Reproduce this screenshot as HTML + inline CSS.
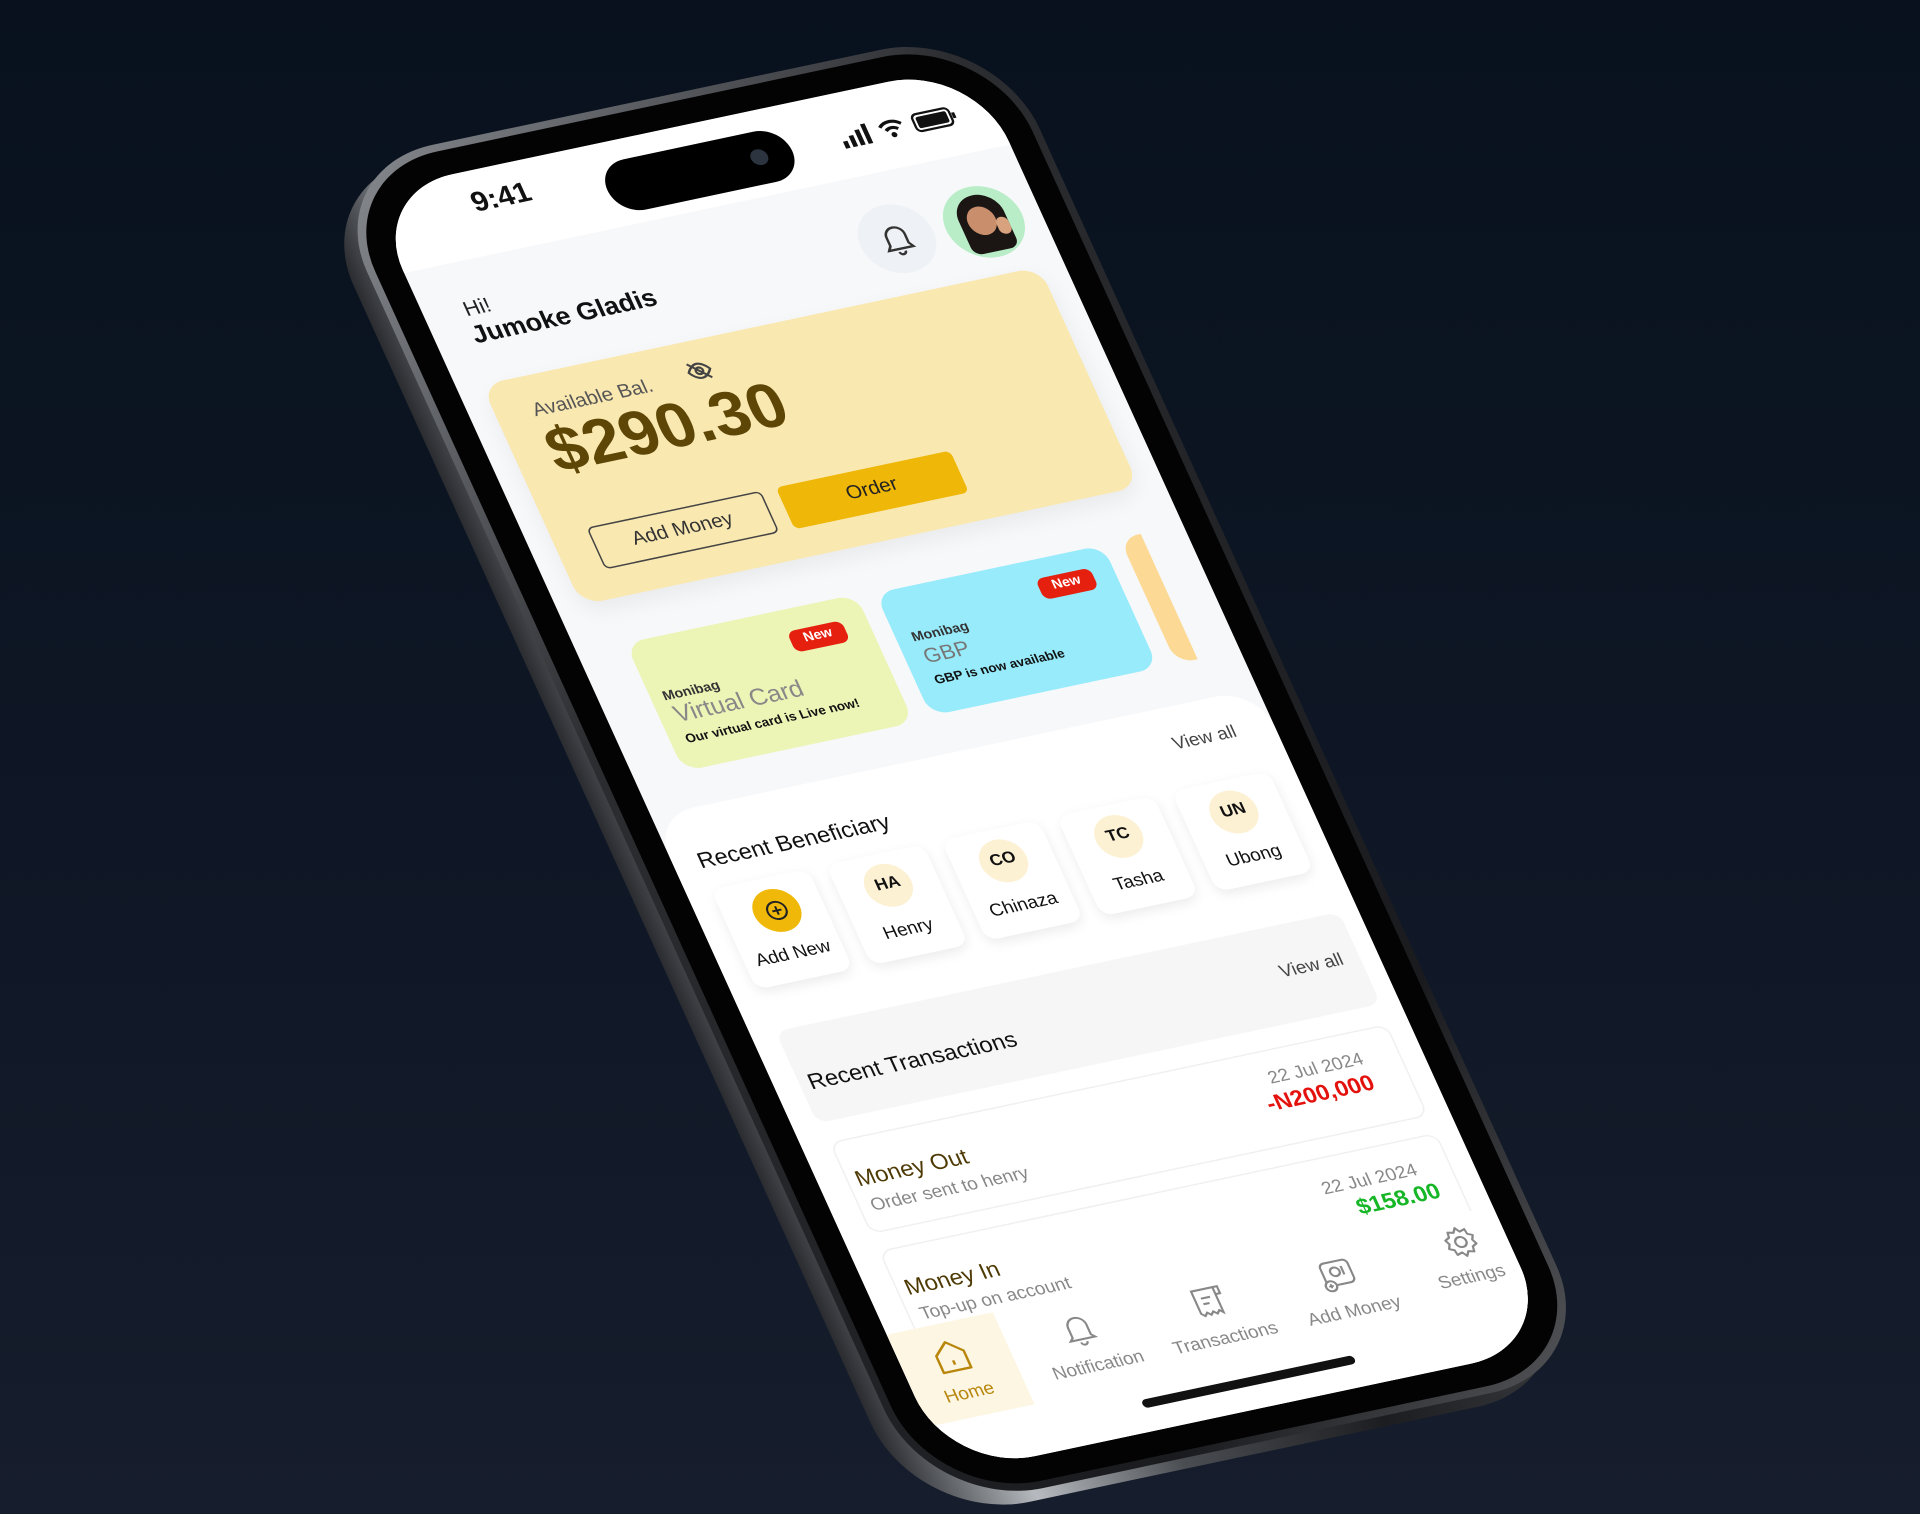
<!DOCTYPE html>
<html><head><meta charset="utf-8">
<style>
*{box-sizing:border-box;margin:0;padding:0}
html,body{width:1920px;height:1514px;overflow:hidden}
body{background:linear-gradient(180deg,#08111d 0%,#0f1726 55%,#161d2c 100%);font-family:"Liberation Sans",sans-serif;position:relative}
.m{position:absolute;left:0;top:0;transform-origin:0 0;transform:matrix(1.5153,-0.3214,0.6333,1.3934,367.4,192.2)}
.side{transform:matrix(1.5153,-0.3214,0.6333,1.3934,354,206)}
.abs{position:absolute}
.t{position:absolute;white-space:nowrap}
</style></head><body>
<div class="m side"><div class="abs" style="left:-22px;top:-22px;width:444px;height:964px;border-radius:74px;background:linear-gradient(90deg,#2a2c30,#b7bbc0 18%,#4a4d52 40%,#1c1d20 70%,#3a3c40)"></div></div>
<div class="m">
 <div class="abs" style="left:-22px;top:-22px;width:444px;height:964px;border-radius:74px;background:linear-gradient(135deg,#8a8d92,#2b2d31 30%,#1a1b1e 80%,#55575b)"></div>
 <div class="abs" style="left:-17px;top:-17px;width:434px;height:954px;border-radius:70px;background:#030303"></div>
 <div class="abs" style="left:0;top:0;width:400px;height:920px;border-radius:56px;background:#f7f8fa;overflow:hidden">
  <div class="abs" style="left:0;top:0;width:400px;height:58px;background:#fff"></div>
  <div class="t" style="left:60px;top:12px;font-size:19px;font-weight:bold;color:#111">9:41</div>
  <div class="abs" style="left:145px;top:14px;width:122px;height:36px;border-radius:18px;background:#000"></div>
  <div class="abs" style="left:240px;top:26px;width:11px;height:11px;border-radius:50%;background:#2c3440"></div>
  <svg class="abs" style="left:300px;top:22px" width="90" height="18" viewBox="0 0 90 18">
   <rect x="0" y="11" width="3" height="5" fill="#111"/><rect x="5" y="8" width="3" height="8" fill="#111"/><rect x="10" y="5" width="3" height="11" fill="#111"/><rect x="15" y="2" width="3" height="14" fill="#111"/>
   <path d="M26 7a10 10 0 0 1 14 0M29 10a6 6 0 0 1 8 0" stroke="#111" stroke-width="2.2" fill="none"/><circle cx="33" cy="13.5" r="1.8" fill="#111"/>
   <rect x="48" y="3" width="24" height="12" rx="3" fill="none" stroke="#111" stroke-width="1.5"/><rect x="50" y="5" width="20" height="8" rx="1.5" fill="#111"/><rect x="73" y="7" width="2" height="4" fill="#111"/>
  </svg>
  <div class="abs" style="left:282px;top:80px;width:48px;height:48px;border-radius:50%;background:#eef1f5"></div>
  <svg class="abs" style="left:294px;top:91px" width="24" height="26" viewBox="0 0 24 26"><path d="M6 17V11a6 6 0 0 1 12 0v6l2 3H4z M10 22a2 2 0 0 0 4 0" fill="none" stroke="#333" stroke-width="1.6"/></svg>
  <div class="abs" style="left:338px;top:80px;width:50px;height:50px;border-radius:50%;background:#b9edc8;overflow:hidden">
   <div class="abs" style="left:10px;top:6px;width:30px;height:40px;border-radius:15px 15px 6px 6px;background:#1b1614"></div>
   <div class="abs" style="left:15px;top:14px;width:18px;height:20px;border-radius:50%;background:#c98f6d"></div>
   <div class="abs" style="left:32px;top:24px;width:8px;height:12px;border-radius:4px;background:#d9a27f"></div>
  </div>
  <div class="t" style="left:26px;top:82px;font-size:14px;color:#222">Hi!</div>
  <div class="t" style="left:24px;top:99px;font-size:17px;font-weight:bold;color:#111">Jumoke Gladis</div>
  <div class="abs" style="left:16px;top:142px;width:368px;height:158px;border-radius:14px;background:#fae8b1;box-shadow:0 6px 14px rgba(0,0,0,.06)"></div>
  <div class="t" style="left:40px;top:158px;font-size:13px;color:#555">Available Bal.</div>
  <svg class="abs" style="left:142px;top:154px" width="18" height="18" viewBox="0 0 18 18"><path d="M2 9s3-5 7-5 7 5 7 5-3 5-7 5-7-5-7-5zM3 3l12 12" fill="none" stroke="#444" stroke-width="1.5"/><circle cx="9" cy="9" r="2.3" fill="none" stroke="#444" stroke-width="1.5"/></svg>
  <div class="t" style="left:38px;top:172px;font-size:43px;font-weight:bold;color:#5e4606;letter-spacing:0px">$290.30</div>
  <div class="abs" style="left:40px;top:250px;width:115px;height:30px;border:1.5px solid #444;border-radius:4px"></div>
  <div class="t" style="left:40px;top:256px;width:115px;text-align:center;font-size:13px;color:#333">Add Money</div>
  <div class="abs" style="left:165px;top:250px;width:115px;height:30px;border-radius:4px;background:#efb708"></div>
  <div class="t" style="left:165px;top:256px;width:115px;text-align:center;font-size:13px;color:#222">Order</div>
  <div class="abs" style="left:32px;top:331px;width:152px;height:92px;border-radius:12px;background:#ecf4b6"></div>
  <div class="abs" style="left:132px;top:346px;width:36px;height:15px;border-radius:5px;background:#e5200f"></div>
  <div class="t" style="left:132px;top:347px;width:36px;text-align:center;font-size:9px;color:#fff;font-weight:bold">New</div>
  <div class="t" style="left:40px;top:366px;font-size:9px;color:#333;font-weight:bold">Monibag</div>
  <div class="t" style="left:42px;top:377px;font-size:16px;color:#888">Virtual Card</div>
  <div class="t" style="left:42px;top:397px;font-size:8.5px;color:#111;font-weight:bold">Our virtual card is Live now!</div>
  <div class="abs" style="left:196px;top:333px;width:150px;height:88px;border-radius:12px;background:#97ebfb"></div>
  <div class="abs" style="left:296px;top:346px;width:36px;height:15px;border-radius:5px;background:#e5200f"></div>
  <div class="t" style="left:296px;top:347px;width:36px;text-align:center;font-size:9px;color:#fff;font-weight:bold">New</div>
  <div class="t" style="left:206px;top:362px;font-size:9px;color:#333;font-weight:bold">Monibag</div>
  <div class="t" style="left:208px;top:373px;font-size:14px;color:#777">GBP</div>
  <div class="t" style="left:208px;top:393px;font-size:8.5px;color:#111;font-weight:bold">GBP is now available</div>
  <div class="abs" style="left:358px;top:331px;width:14px;height:90px;border-radius:12px 0 0 12px;background:#fcd995"></div>
  <div class="abs" style="left:0;top:448px;width:400px;height:472px;border-radius:28px 28px 0 0;background:#fff"></div>
  <div class="t" style="left:334px;top:466px;font-size:12px;color:#444">View all</div>
  <div class="t" style="left:16px;top:476px;font-size:15px;color:#111">Recent Beneficiary</div>
  <div class="abs" style="left:16px;top:504px;width:64px;height:72px;border-radius:8px;background:#fff;box-shadow:0 3px 8px rgba(0,0,0,.08)"></div>
  <div class="abs" style="left:35px;top:512px;width:30px;height:30px;border-radius:50%;background:#f0b90a"></div>
  <svg class="abs" style="left:40px;top:517px" width="20" height="20" viewBox="0 0 20 20"><circle cx="10" cy="10" r="6" fill="none" stroke="#222" stroke-width="1.3"/><path d="M10 7v6M7 10h6" stroke="#222" stroke-width="1.3"/></svg>
  <div class="t" style="left:16px;top:550px;width:64px;text-align:center;font-size:12px;color:#111">Add New</div>
  <div class="abs" style="left:92px;top:504px;width:64px;height:72px;border-radius:8px;background:#fff;box-shadow:0 3px 8px rgba(0,0,0,.08)"></div>
  <div class="abs" style="left:109px;top:511px;width:30px;height:30px;border-radius:50%;background:#fdf1d4"></div>
  <div class="t" style="left:92px;top:519px;width:64px;text-align:center;font-size:11px;color:#111;font-weight:bold">HA</div>
  <div class="t" style="left:92px;top:550px;width:64px;text-align:center;font-size:12px;color:#111">Henry</div>
  <div class="abs" style="left:168px;top:504px;width:64px;height:72px;border-radius:8px;background:#fff;box-shadow:0 3px 8px rgba(0,0,0,.08)"></div>
  <div class="abs" style="left:185px;top:511px;width:30px;height:30px;border-radius:50%;background:#fdf1d4"></div>
  <div class="t" style="left:168px;top:519px;width:64px;text-align:center;font-size:11px;color:#111;font-weight:bold">CO</div>
  <div class="t" style="left:168px;top:550px;width:64px;text-align:center;font-size:12px;color:#111">Chinaza</div>
  <div class="abs" style="left:244px;top:504px;width:64px;height:72px;border-radius:8px;background:#fff;box-shadow:0 3px 8px rgba(0,0,0,.08)"></div>
  <div class="abs" style="left:261px;top:511px;width:30px;height:30px;border-radius:50%;background:#fdf1d4"></div>
  <div class="t" style="left:244px;top:519px;width:64px;text-align:center;font-size:11px;color:#111;font-weight:bold">TC</div>
  <div class="t" style="left:244px;top:550px;width:64px;text-align:center;font-size:12px;color:#111">Tasha</div>
  <div class="abs" style="left:320px;top:504px;width:64px;height:72px;border-radius:8px;background:#fff;box-shadow:0 3px 8px rgba(0,0,0,.08)"></div>
  <div class="abs" style="left:337px;top:511px;width:30px;height:30px;border-radius:50%;background:#fdf1d4"></div>
  <div class="t" style="left:320px;top:519px;width:64px;text-align:center;font-size:11px;color:#111;font-weight:bold">UN</div>
  <div class="t" style="left:320px;top:550px;width:64px;text-align:center;font-size:12px;color:#111">Ubong</div>
  <div class="abs" style="left:16px;top:606px;width:372px;height:66px;border-radius:8px;background:#f6f6f6"></div>
  <div class="t" style="left:336px;top:630px;font-size:12px;color:#444">View all</div>
  <div class="t" style="left:22px;top:636px;font-size:15px;color:#111">Recent Transactions</div>
  <div class="abs" style="left:18px;top:686px;width:368px;height:66px;border-radius:8px;background:#fff;border:1px solid #f0f0f0"></div>
  <div class="t" style="left:300px;top:698px;font-size:12px;color:#888">22 Jul 2024</div>
  <div class="t" style="left:292px;top:714px;font-size:15px;color:#e3120d;font-weight:bold">-N200,000</div>
  <div class="t" style="left:24px;top:706px;font-size:15px;color:#4e3a05">Money Out</div>
  <div class="t" style="left:26px;top:726px;font-size:12px;color:#888">Order sent to henry</div>
  <div class="abs" style="left:18px;top:764px;width:368px;height:66px;border-radius:8px;background:#fff;border:1px solid #f0f0f0"></div>
  <div class="t" style="left:302px;top:778px;font-size:12px;color:#888">22 Jul 2024</div>
  <div class="t" style="left:318px;top:794px;font-size:15px;color:#16b627;font-weight:bold">$158.00</div>
  <div class="t" style="left:24px;top:784px;font-size:15px;color:#4e3a05">Money In</div>
  <div class="t" style="left:26px;top:804px;font-size:12px;color:#888">Top-up on account</div>
  <div class="abs" style="left:0;top:820px;width:400px;height:100px;background:#fff"></div>
  <div class="abs" style="left:0;top:820px;width:70px;height:66px;background:#fdf6e3"></div>
  <svg class="abs" style="left:20px;top:830px" width="26" height="26" viewBox="0 0 26 26"><path d="M4 11L13 3l9 8v12H4z" fill="none" stroke="#b8860b" stroke-width="1.6" stroke-linejoin="round"/><path d="M13 16v3" stroke="#b8860b" stroke-width="1.6"/></svg>
  <div class="t" style="left:0;top:862px;width:68px;text-align:center;font-size:12px;color:#b8860b">Home</div>
  <svg class="abs" style="left:104px;top:830px" width="26" height="26" viewBox="0 0 26 26"><path d="M7 18V11a6 6 0 0 1 12 0v7l2 2H5z M11 22a2 2 0 0 0 4 0" fill="none" stroke="#888" stroke-width="1.4"/></svg>
  <div class="t" style="left:80px;top:862px;width:78px;text-align:center;font-size:12px;color:#888">Notification</div>
  <svg class="abs" style="left:190px;top:830px" width="26" height="26" viewBox="0 0 26 26"><path d="M5 4h14v18l-2-2-2 2-2-2-2 2-2-2-2 2-2-2zM19 4h3v5h-3M9 10h6M9 14h4" fill="none" stroke="#888" stroke-width="1.4"/></svg>
  <div class="t" style="left:163px;top:862px;width:80px;text-align:center;font-size:12px;color:#888">Transactions</div>
  <svg class="abs" style="left:275px;top:830px" width="26" height="26" viewBox="0 0 26 26"><rect x="4" y="4" width="18" height="16" rx="3" fill="none" stroke="#888" stroke-width="1.4"/><circle cx="12" cy="11" r="3" fill="none" stroke="#888" stroke-width="1.4"/><path d="M17 8v6" stroke="#888" stroke-width="1.4"/><circle cx="6" cy="20" r="3.5" fill="#fff" stroke="#888" stroke-width="1.4"/><path d="M6 18.5v3M4.5 20h3" stroke="#888" stroke-width="1.2"/></svg>
  <div class="t" style="left:250px;top:862px;width:76px;text-align:center;font-size:12px;color:#888">Add Money</div>
  <svg class="abs" style="left:358px;top:826px" width="26" height="26" viewBox="0 0 26 26"><path d="M13 3l2 3 3.5-1 .5 3.5 3 1.5-1.5 3 1.5 3-3 1.5-.5 3.5-3.5-1-2 3-2-3-3.5 1-.5-3.5-3-1.5 1.5-3-1.5-3 3-1.5.5-3.5 3.5 1z" fill="none" stroke="#888" stroke-width="1.4" stroke-linejoin="round"/><circle cx="13" cy="13" r="3.5" fill="none" stroke="#888" stroke-width="1.4"/></svg>
  <div class="t" style="left:336px;top:856px;width:64px;text-align:center;font-size:12px;color:#888">Settings</div>
  <div class="abs" style="left:135px;top:898px;width:140px;height:6px;border-radius:3px;background:#111"></div>
 </div>
</div>
</body></html>
